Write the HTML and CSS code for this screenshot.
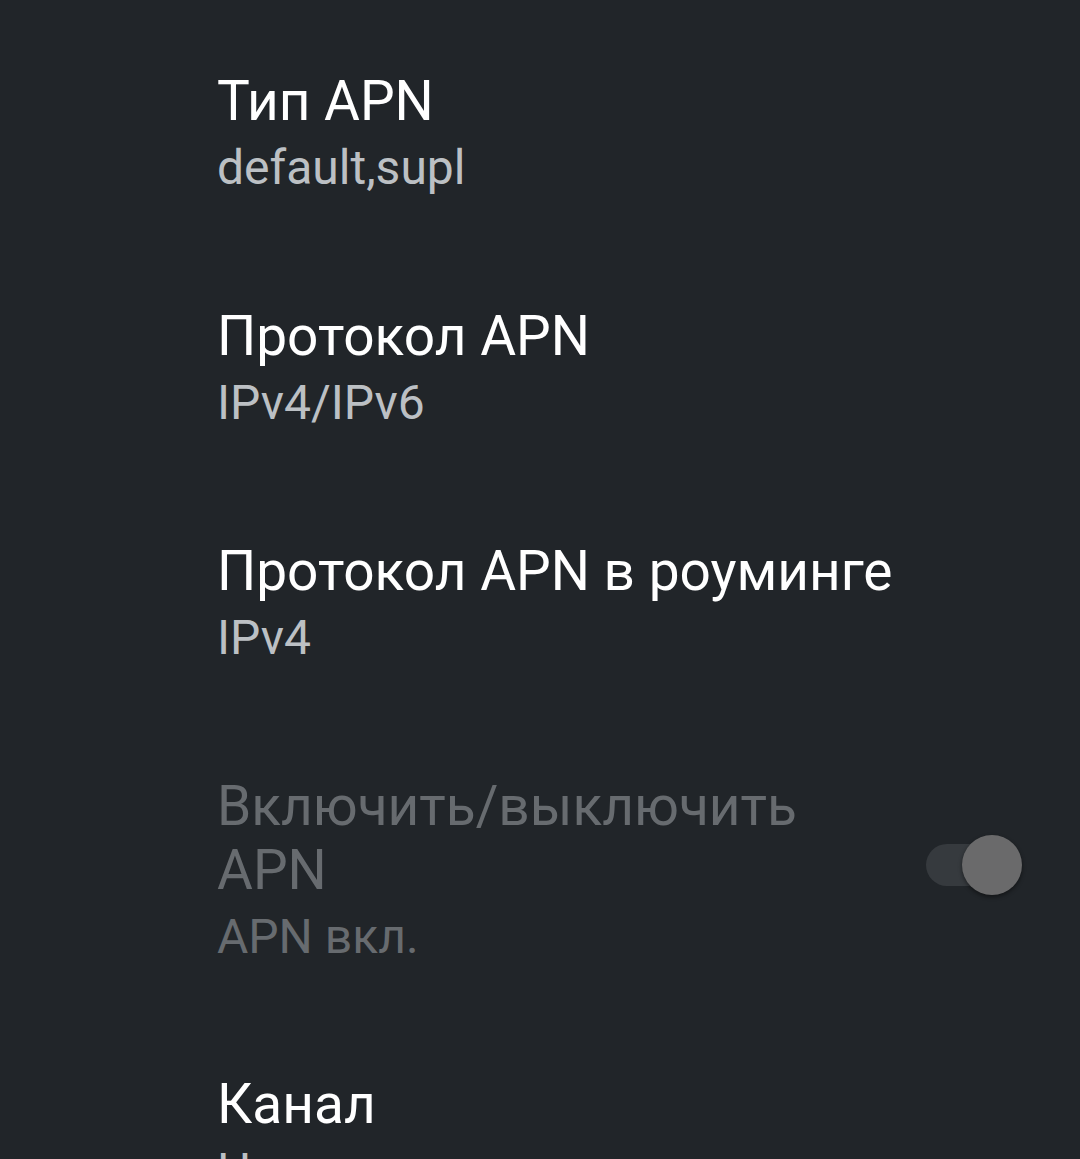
FILE: index.html
```html
<!DOCTYPE html>
<html lang="ru">
<head>
  <meta charset="UTF-8" />
  <meta name="viewport" content="width=device-width, initial-scale=1.0"/>
  <title>Изменить точку доступа</title>
  <link rel="stylesheet" href="styles.css">
</head>
<body>
  <div class="pref-list">
    <div class="pref">
      <div class="pref-text">
        <div class="pref-title">Тип APN</div>
        <div class="pref-summary">default,supl</div>
      </div>
    </div>

    <div class="pref">
      <div class="pref-text">
        <div class="pref-title">Протокол APN</div>
        <div class="pref-summary">IPv4/IPv6</div>
      </div>
    </div>

    <div class="pref">
      <div class="pref-text">
        <div class="pref-title">Протокол APN в роуминге</div>
        <div class="pref-summary">IPv4</div>
      </div>
    </div>

    <div class="pref disabled">
      <div class="pref-text narrow">
        <div class="pref-title">Включить/выключить APN</div>
        <div class="pref-summary">APN вкл.</div>
      </div>
      <div class="switch">
        <span class="switch-track"></span>
        <span class="switch-thumb"></span>
      </div>
    </div>

    <div class="pref">
      <div class="pref-text">
        <div class="pref-title">Канал</div>
        <div class="pref-summary">Не указано</div>
      </div>
    </div>
  </div>
</body>
</html>
```

FILE: styles.css
```css
html, body {
  margin: 0;
  height: 1159px;
  overflow: hidden;
}

body {
  background-color: #212529;
  font-family: Roboto, "Noto Sans", Arial, sans-serif;
  color: #fff;
}

.pref-list {
  padding-top: 15px;
}

.pref {
  display: flex;
  align-items: center;
  padding: 54px 58px 54px 217px;
}

.pref-text {
  flex: 1;
  min-width: 0;
}

.pref-text.narrow {
  max-width: 640px;
}

.pref-title {
  font-size: 55px;
  line-height: 64px;
  color: #ffffff;
}

.pref-summary {
  margin-top: 7px;
  font-size: 48px;
  line-height: 56px;
  color: #bcc0c4;
}

.disabled {
  padding-bottom: 53px;
}

.disabled .pref-title,
.disabled .pref-summary {
  color: #676b6f;
}

.switch {
  position: relative;
  width: 96px;
  height: 60px;
  margin-top: -9px;
  margin-left: auto;
}

.switch-track {
  position: absolute;
  left: 0;
  top: 9px;
  width: 84px;
  height: 42px;
  border-radius: 21px;
  background-color: #363a3e;
}

.switch-thumb {
  position: absolute;
  right: 0;
  top: 0;
  width: 60px;
  height: 60px;
  border-radius: 50%;
  background-color: #6a6a6b;
  box-shadow: 0 2px 4px rgba(0, 0, 0, 0.45);
}
```
